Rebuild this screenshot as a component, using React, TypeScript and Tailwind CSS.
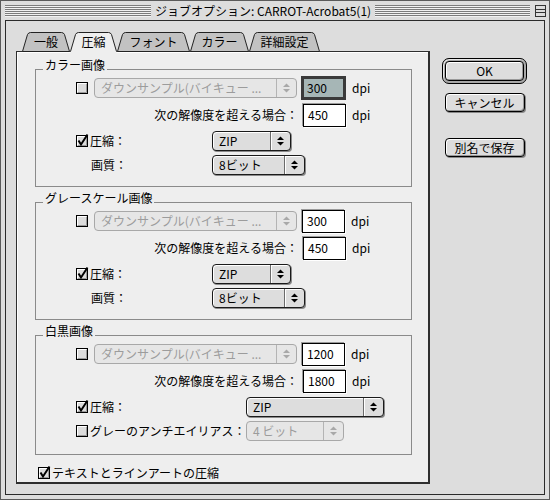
import React from "react";

const FONT = "font-['Noto_Sans_CJK_JP','Noto_Sans',sans-serif]";

// title bar pinstripes
const STRIPES =
  "h-[12px] bg-[image:repeating-linear-gradient(to_bottom,#7c7c7c_0px,#7c7c7c_1px,#f2f2f2_1px,#f2f2f2_2px)]";

const CollapseBox = () => (
  <svg width="11" height="12" viewBox="0 0 11 12" className="shrink-0 ml-[5px]">
    <rect x="0.5" y="0.5" width="10" height="11" fill="#dddddd" stroke="#333" />
    <path d="M1 4.5 H10 M1 7.5 H10" stroke="#333" />
  </svg>
);

const Checkbox = ({ checked = false }: { checked?: boolean }) => (
  <svg width="12" height="12" viewBox="0 0 12 12" className="shrink-0 overflow-visible">
    <rect x="0.5" y="0.5" width="11" height="11" fill="#dcdcdc" stroke="#000" />
    <path d="M1.5 10 V1.5 H10" stroke="#fff" fill="none" />
    <path d="M2 10.5 H10.5 V2" stroke="#9a9a9a" fill="none" />
    {checked && (
      <path d="M2.5 5.5 L5 9.5 L11.5 -0.5" stroke="#000" strokeWidth="2" fill="none" />
    )}
  </svg>
);

const Arrows = ({ disabled = false }: { disabled?: boolean }) => {
  const c = disabled ? "#a8a8a8" : "#000";
  return (
    <svg width="7" height="10" viewBox="0 0 7 10">
      <polygon points="0,4 3.5,0.5 7,4" fill={c} />
      <polygon points="0,6 3.5,9.5 7,6" fill={c} />
    </svg>
  );
};

type PopupProps = { label: string; w: string; disabled?: boolean; ml?: string };

const Popup = ({ label, w, disabled = false, ml = "" }: PopupProps) => (
  <div
    className={`${w} ${ml} h-[20px] shrink-0 flex rounded-[4px] border ${
      disabled
        ? "border-[#a8a8a8] text-[#9c9c9c] bg-[#e6e6e6]"
        : "border-[#1a1a1a] bg-[#dddddd] shadow-[inset_1px_1px_0_#fff,1px_1px_0_#8a8a8a]"
    }`}
  >
    <span className="flex-1 pl-[6px] flex items-center whitespace-nowrap overflow-hidden">
      {label}
    </span>
    <span
      className={`w-[20px] border-l flex items-center justify-center ${
        disabled ? "border-[#b4b4b4]" : "border-[#6a6a6a] shadow-[inset_1px_0_0_#fff]"
      }`}
    >
      <Arrows disabled={disabled} />
    </span>
  </div>
);

const Field = ({ value, focused = false }: { value: string; focused?: boolean }) =>
  focused ? (
    <div className="ml-[4px] w-[45px] h-[24px] border-[3px] border-[#3a3a3a] bg-[#a6b6b6] flex items-center pl-[3px]">
      {value}
    </div>
  ) : (
    <div className="ml-[5px] w-[43px] h-[23px] border border-black bg-white flex items-center pl-[4px] shadow-[1px_1px_0_#fff,-1px_-1px_0_#9a9a9a]">
      {value}
    </div>
  );

const Row = ({ children, mt = "" }: { children: React.ReactNode; mt?: string }) => (
  <div className={`h-[24px] flex items-center ${mt}`}>{children}</div>
);

const Group = ({ title, h, children }: { title: string; h: string; children: React.ReactNode }) => (
  <div className={`border border-[#8a8a8a] flex flex-col ${h}`}>
    <span className="-mt-[12px] ml-[7px] self-start h-[14px] px-[2px] bg-[#eeeeee] flex items-center">
      {title}
    </span>
    <div className="pl-[40px] mt-[4px] flex flex-col">{children}</div>
  </div>
);

const Tab = ({ label, width, w, selected = false }: { label: string; width: number; w: string; selected?: boolean }) => {
  const edge = `M0.5 19.5 L5.5 2.5 Q6.5 0.5 8.5 0.5 H${width - 8.5} Q${width - 6.5} 0.5 ${width - 5.5} 2.5 L${width - 0.5} 19.5`;
  return (
    <div className={`relative h-[21px] ${w} shrink-0 flex items-center justify-center pb-[2px]`}>
      <svg className="absolute left-0 top-0" width={width} height="21" viewBox={`0 0 ${width} 21`}>
        {selected ? (
          <>
            <path d={`${edge} L${width - 0.5} 21 L0.5 21 Z`} fill="#eeeeee" />
            <path d={edge} fill="none" stroke="#222" />
          </>
        ) : (
          <path d={`${edge} Z`} fill="#c2c2c2" stroke="#222" />
        )}
      </svg>
      <span className="relative">{label}</span>
    </div>
  );
};

const ImageGroup = ({ title, focusFirst = false }: { title: string; focusFirst?: boolean }) => (
  <Group title={title} h="h-[118px]">
    <Row>
      <Checkbox />
      <Popup label="ダウンサンプル(バイキュー ..." w="w-[203px]" ml="ml-[6px]" disabled />
      <Field value="300" focused={focusFirst} />
      <span className="ml-[6px]">dpi</span>
    </Row>
    <Row mt="mt-[3px]">
      <span className="w-[222px] text-right">次の解像度を超える場合：</span>
      <Field value="450" />
      <span className="ml-[6px]">dpi</span>
    </Row>
    <Row mt="mt-[2px]">
      <div className="w-[136px] flex items-center">
        <Checkbox checked />
        <span className="ml-[2px]">圧縮：</span>
      </div>
      <Popup label="ZIP" w="w-[79px]" />
    </Row>
    <Row>
      <div className="w-[136px] pl-[15px]">画質：</div>
      <Popup label="8ビット" w="w-[93px]" />
    </Row>
  </Group>
);

export default function App() {
  return (
    <div
      className={`w-[550px] h-[500px] bg-[#dddddd] border border-[#5a5a5a] flex flex-col text-[12px] leading-none text-black ${FONT}`}
    >
      {/* title bar */}
      <div className="h-[19px] shrink-0 flex items-center pl-[4px] pr-[3px]">
        <div className={`w-[146px] ${STRIPES}`} />
        <span className="px-[4px] whitespace-nowrap">ジョブオプション: CARROT-Acrobat5(1)</span>
        <div className={`flex-1 ${STRIPES}`} />
        <CollapseBox />
      </div>

      {/* window body */}
      <div className="flex-1 mx-[4px] mb-[4px] border border-[#2a2a2a] flex">
        <div className="w-[424px] pl-[10px] pt-[11px] flex flex-col">
          <div className="relative z-10 h-[21px] -mb-[2px] ml-[6px] flex">
            <Tab label="一般" width={48} w="w-[48px]" />
            <Tab label="圧縮" width={47} w="w-[47px]" selected />
            <Tab label="フォント" width={73} w="w-[73px]" />
            <Tab label="カラー" width={59} w="w-[59px]" />
            <Tab label="詳細設定" width={71} w="w-[71px]" />
          </div>

          <div className="w-[414px] h-[433px] bg-[#eeeeee] border-t border-l border-r-2 border-b-2 border-[#2e2e2e] shadow-[inset_1px_1px_0_#fff] pt-[17px] pl-[18px] pr-[16px] flex flex-col">
            <ImageGroup title="カラー画像" focusFirst />
            <div className="mt-[15px]">
              <ImageGroup title="グレースケール画像" />
            </div>
            <div className="mt-[15px]">
              <Group title="白黒画像" h="h-[120px]">
                <Row>
                  <Checkbox />
                  <Popup label="ダウンサンプル(バイキュー ..." w="w-[203px]" ml="ml-[6px]" disabled />
                  <Field value="1200" />
                  <span className="ml-[6px]">dpi</span>
                </Row>
                <Row mt="mt-[3px]">
                  <span className="w-[222px] text-right">次の解像度を超える場合：</span>
                  <Field value="1800" />
                  <span className="ml-[6px]">dpi</span>
                </Row>
                <Row mt="mt-[2px]">
                  <div className="w-[170px] flex items-center">
                    <Checkbox checked />
                    <span className="ml-[2px]">圧縮：</span>
                  </div>
                  <Popup label="ZIP" w="w-[138px]" />
                </Row>
                <Row>
                  <div className="w-[170px] flex items-center">
                    <Checkbox />
                    <span className="ml-[2px] whitespace-nowrap">グレーのアンチエイリアス：</span>
                  </div>
                  <Popup label="4 ビット" w="w-[98px]" disabled />
                </Row>
              </Group>
            </div>
            <div className="mt-[11px] ml-[3px] h-[14px] flex items-center">
              <Checkbox checked />
              <span className="ml-[2px]">テキストとラインアートの圧縮</span>
            </div>
          </div>
        </div>

        {/* buttons */}
        <div className="ml-[12px] pt-[37px] w-[85px] flex flex-col items-center">
          <div className="w-[85px] h-[26px] rounded-[7px] border border-black bg-[#a8a8a8] p-[2px] shadow-[inset_1px_1px_0_#e8e8e8]">
            <div className="h-full rounded-[4px] border border-black bg-[#dddddd] shadow-[inset_1px_1px_0_#fff,inset_-1px_-1px_0_#999] flex items-center justify-center">
              OK
            </div>
          </div>
          <div className="mt-[9px] w-[80px] h-[19px] rounded-[4px] border border-black bg-[#dddddd] shadow-[inset_1px_1px_0_#fff,inset_-1px_-1px_0_#999,1px_1px_0_#888] flex items-center justify-center">
            キャンセル
          </div>
          <div className="mt-[26px] w-[80px] h-[19px] rounded-[4px] border border-black bg-[#dddddd] shadow-[inset_1px_1px_0_#fff,inset_-1px_-1px_0_#999,1px_1px_0_#888] flex items-center justify-center">
            別名で保存
          </div>
        </div>
      </div>
    </div>
  );
}
